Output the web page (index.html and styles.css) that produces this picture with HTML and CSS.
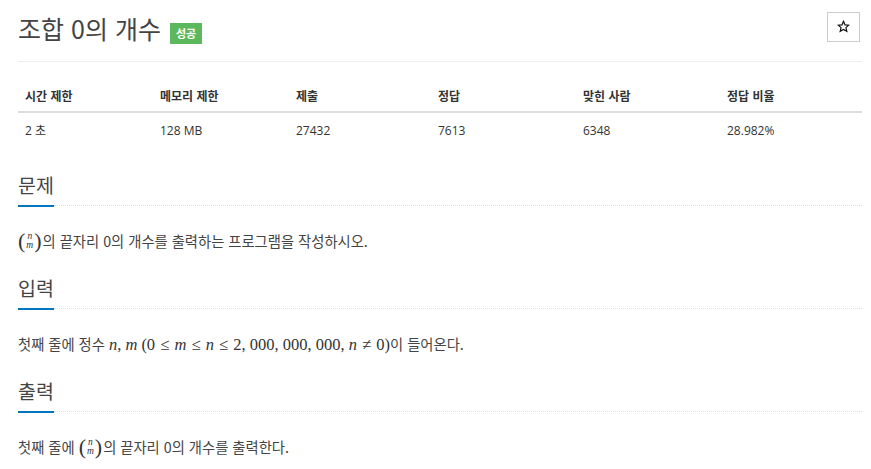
FILE: index.html
```html
<!DOCTYPE html>
<html lang="ko">
<head>
<meta charset="utf-8">
<title>조합 0의 개수</title>
<link rel="stylesheet" href="styles.css">
</head>
<body>
<div class="page">
  <div class="page-header">
    <h1 class="title"><span class="title-text">조합 0의 개수</span><span class="badge">성공</span></h1>
    <button class="star" type="button" aria-label="즐겨찾기"><svg class="star-icon" viewBox="0 0 24 24" width="13" height="13"><path d="M12 2.5l2.8 6.4 6.9.6-5.2 4.6 1.6 6.8L12 17.3l-6.1 3.6 1.6-6.8-5.2-4.6 6.9-.6z" fill="none" stroke="#111" stroke-width="2.2" stroke-linejoin="miter"/></svg></button>
  </div>

  <table class="info">
    <thead>
      <tr>
        <th>시간 제한</th>
        <th>메모리 제한</th>
        <th>제출</th>
        <th>정답</th>
        <th>맞힌 사람</th>
        <th>정답 비율</th>
      </tr>
    </thead>
    <tbody>
      <tr>
        <td>2 초</td>
        <td>128 MB</td>
        <td>27432</td>
        <td>7613</td>
        <td>6348</td>
        <td>28.982%</td>
      </tr>
    </tbody>
  </table>

  <section class="section">
    <h2 class="headline"><span class="headline-text">문제</span><span class="headline-rule"></span></h2>
    <p class="text"><span class="binom"><span class="paren">(</span><span class="stack"><i>n</i><i>m</i></span><span class="paren">)</span></span>의 끝자리 0의 개수를 출력하는 프로그램을 작성하시오.</p>
  </section>

  <section class="section">
    <h2 class="headline"><span class="headline-text">입력</span><span class="headline-rule"></span></h2>
    <p class="text">첫째 줄에 정수 <span class="math"><i>n</i>, <i>m</i></span> <span class="math">(0 <span class="rel">≤</span> <i>m</i> <span class="rel">≤</span> <i>n</i> <span class="rel">≤</span> 2, 000, 000, 000, <i>n</i> <span class="rel">≠</span> 0)</span>이 들어온다.</p>
  </section>

  <section class="section">
    <h2 class="headline"><span class="headline-text">출력</span><span class="headline-rule"></span></h2>
    <p class="text">첫째 줄에 <span class="binom"><span class="paren">(</span><span class="stack"><i>n</i><i>m</i></span><span class="paren">)</span></span>의 끝자리 0의 개수를 출력한다.</p>
  </section>
</div>
</body>
</html>
```

FILE: styles.css
```css
* { box-sizing: border-box; }

html, body {
  margin: 0;
  padding: 0;
  background: #fff;
}

body {
  font-family: "Open Sans", "Noto Sans CJK KR", sans-serif;
  color: #333;
}

.page {
  width: 844px;
  margin-left: 18px;
}

.page-header {
  display: flex;
  justify-content: space-between;
  align-items: flex-start;
  padding-top: 11px;
  padding-bottom: 16px;
  border-bottom: 1px solid #eee;
}

.title {
  display: flex;
  align-items: flex-end;
  margin: 0;
  font-family: "Noto Sans CJK KR", sans-serif;
  font-weight: 400;
  font-size: 25px;
  line-height: 34px;
  color: #444;
}

.badge {
  display: inline-block;
  margin-left: 9px;
  margin-bottom: 1px;
  height: 21px;
  padding: 0 6px;
  background: #5cb85c;
  color: #fff;
  font-size: 11px;
  font-weight: 700;
  line-height: 21px;
}

.star {
  display: flex;
  align-items: center;
  justify-content: center;
  margin-top: 1px;
  margin-right: 2px;
  width: 33px;
  height: 30px;
  padding: 0;
  border: 1px solid #ccc;
  background: #fff;
}

.star-icon {
  display: block;
  margin-top: -1px;
}

.info {
  width: 844px;
  margin-top: 13px;
  border-collapse: collapse;
  table-layout: fixed;
  font-size: 12px;
}

.info th,
.info td {
  padding: 8px 7px;
  line-height: 20px;
  text-align: left;
  color: #333;
}

.info th {
  padding-top: 11px;
  padding-bottom: 5px;
  font-family: "Noto Sans CJK KR", sans-serif;
  font-weight: 700;
  border-bottom: 2px solid #ddd;
}

.info td {
  font-family: "Open Sans", "Noto Sans CJK KR", sans-serif;
  font-weight: 400;
}

.info th:nth-child(1) { width: 135px; }
.info th:nth-child(2) { width: 136px; }
.info th:nth-child(3) { width: 142px; }
.info th:nth-child(4) { width: 145px; }
.info th:nth-child(5) { width: 144px; }
.info th:nth-child(6) { width: 142px; }

.section {
  margin-top: 22px;
}

.section + .section {
  margin-top: 0;
}

.headline {
  display: flex;
  align-items: flex-end;
  margin: 0;
  font-family: "Noto Sans CJK KR", sans-serif;
  font-weight: 400;
  font-size: 19.5px;
  line-height: 28px;
  color: #444;
}

.headline-text {
  padding-bottom: 6px;
  border-bottom: 2px solid #0076c0;
}

.headline-rule {
  flex: 1;
  border-bottom: 1px dotted #ddd;
  margin-bottom: 1px;
}

.text {
  margin: 22px 0 21px;
  font-family: "Noto Sans CJK KR", sans-serif;
  font-size: 14.3px;
  line-height: 24px;
  height: 24px;
  color: #444;
}

.math {
  font-family: "Liberation Serif", "DejaVu Serif", serif;
  font-size: 16.5px;
  color: #333;
}

.rel {
  padding: 0 1px;
}

.math i,
.stack i {
  font-family: "Liberation Serif", "DejaVu Serif", serif;
  font-style: italic;
}

.binom {
  display: inline-flex;
  align-items: center;
  vertical-align: middle;
  height: 20px;
  margin: -4px 1px 0 0;
  font-family: "Liberation Serif", "DejaVu Serif", serif;
  color: #333;
}

.paren {
  font-size: 22px;
  line-height: 20px;
}

.stack {
  display: flex;
  flex-direction: column;
  align-items: center;
  font-size: 9.5px;
  line-height: 9.5px;
  padding: 0 1px;
}
```
